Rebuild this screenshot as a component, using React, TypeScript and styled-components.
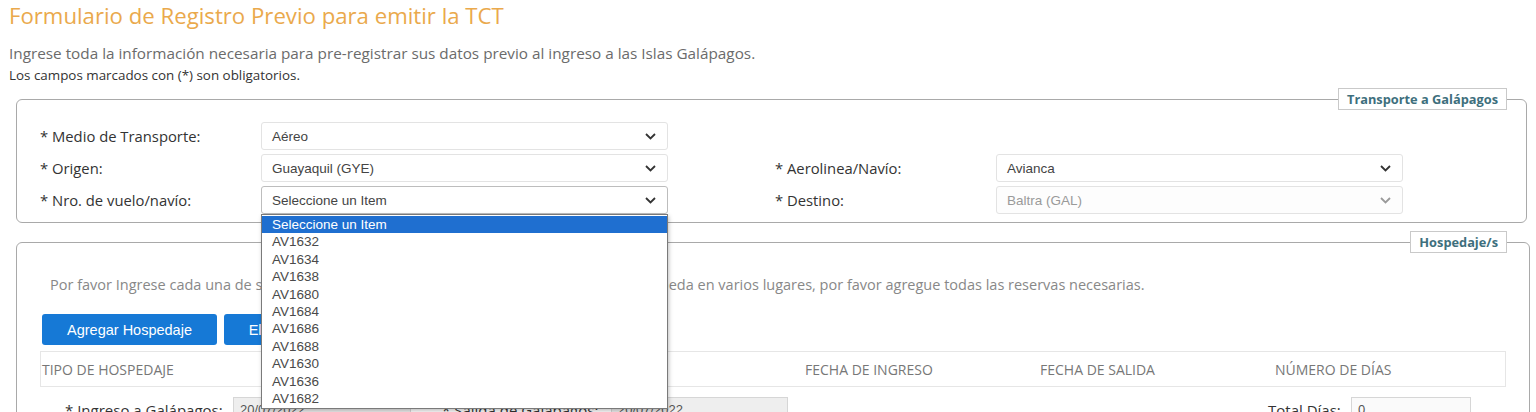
import React from 'react';
import styled, { createGlobalStyle } from 'styled-components';

const GlobalStyle = createGlobalStyle`
  body {
    margin: 0;
    background: #ffffff;
    font-family: "Open Sans", "Liberation Sans", sans-serif;
    color: #333;
    overflow: hidden;
  }
`;

const Page = styled.div`
  width: 1536px;
  height: 412px;
  box-sizing: border-box;
  padding: 0 9px;
  overflow: hidden;
`;

const Title = styled.h1`
  margin: 0;
  font-size: 22.2px;
  font-weight: 400;
  line-height: 32px;
  color: #eaa94c;
`;

const Intro = styled.p`
  margin: 11px 0 0;
  font-size: 15.3px;
  line-height: 20px;
  color: #6b6b6b;
`;

const Note = styled.p`
  margin: 4px 0 0;
  font-size: 13.4px;
  line-height: 16px;
  color: #333;
`;

const Panel = styled.fieldset<{ $top: number; $right: number }>`
  margin: ${p => p.$top}px ${p => p.$right}px 0 7px;
  padding: 0 23px 8px 23px;
  border: 1px solid #a9a9a9;
  border-radius: 6px;
  min-width: 0;
`;

const Legend = styled.legend<{ $right: number }>`
  margin-left: auto;
  margin-right: ${p => p.$right}px;
  padding: 0 8px;
  height: 22px;
  box-sizing: border-box;
  border: 1px solid #c9c9c9;
  background: #fff;
  font-size: 12.8px;
  font-weight: 700;
  line-height: 20px;
  color: #3e6f7d;
`;

const TransportRows = styled.div`
  display: flex;
  flex-direction: column;
  gap: 4px;
  padding-top: 12px;
`;

const Row = styled.div`
  display: flex;
  gap: 107px;
`;

const Field = styled.div`
  display: flex;
  align-items: center;
`;

const Label = styled.span`
  width: 221px;
  font-size: 14.8px;
  color: #333;
`;

const SelectWrap = styled.div`
  position: relative;
  width: 407px;
`;

const SelectBox = styled.div<{ $disabled?: boolean; $open?: boolean }>`
  height: 28px;
  box-sizing: border-box;
  display: flex;
  align-items: center;
  justify-content: space-between;
  padding: 0 11px 0 10px;
  border: 1px solid ${p => (p.$open ? '#bdbdbd' : '#e3e3e3')};
  border-radius: 3px;
  background: ${p => (p.$disabled ? '#fdfdfd' : '#fff')};
  font-family: "Liberation Sans", Arial, sans-serif;
  font-size: 13.5px;
  color: ${p => (p.$disabled ? '#9a9a9a' : '#444')};
  svg {
    color: ${p => (p.$disabled ? '#9a9a9a' : '#333')};
  }
`;

const OptionList = styled.ul`
  position: absolute;
  top: 100%;
  left: 0;
  right: 0;
  z-index: 10;
  margin: 0;
  padding: 1px 0;
  list-style: none;
  background: #fff;
  border: 1px solid #7a7a7a;
  box-shadow: 1px 2px 4px rgba(0, 0, 0, 0.25);
`;

const Option = styled.li<{ $active?: boolean }>`
  height: 17.4px;
  line-height: 17.4px;
  padding-left: 10px;
  font-family: "Liberation Sans", Arial, sans-serif;
  font-size: 13.5px;
  color: ${p => (p.$active ? '#fff' : '#4a4a4a')};
  background: ${p => (p.$active ? '#1f6fd0' : 'transparent')};
`;

const HelpText = styled.p`
  margin: 0;
  padding: 22px 0 0 10px;
  font-size: 14.5px;
  line-height: 20px;
  color: #888;
  white-space: nowrap;
`;

const Actions = styled.div`
  display: flex;
  gap: 7px;
  margin-top: 19px;
  padding-left: 2px;
`;

const Button = styled.button`
  height: 31px;
  width: 175px;
  border: none;
  border-radius: 3px;
  background: #1679d6;
  color: #fff;
  font-family: "Liberation Sans", Arial, sans-serif;
  font-size: 14.5px;
`;

const TableHead = styled.div`
  display: grid;
  grid-template-columns: 763px 235px 235px 1fr;
  align-items: center;
  height: 36px;
  margin-top: 6px;
  box-sizing: border-box;
  border: 1px solid #e6e6e6;
  padding-left: 1px;
  font-size: 14px;
  color: #777;
`;

const DatesRow = styled.div`
  display: flex;
  align-items: center;
  margin-top: 10px;
  padding-left: 25px;
`;

const DateLabel = styled.span<{ $w: number }>`
  width: ${p => p.$w}px;
  font-size: 15px;
  color: #333;
  white-space: nowrap;
`;

const TextInput = styled.div<{ $w: number; $muted?: boolean }>`
  width: ${p => p.$w}px;
  height: 26px;
  box-sizing: border-box;
  padding: 4px 6px;
  border: 1px solid #d6d6d6;
  background: ${p => (p.$muted ? '#eeeeee' : '#fafafa')};
  font-family: "Liberation Sans", Arial, sans-serif;
  font-size: 13px;
  color: #555;
`;

const Spacer = styled.div<{ $w: number }>`
  width: ${p => p.$w}px;
  flex: none;
`;

const Chevron = () => (
  <svg width="11" height="7" viewBox="0 0 11 7" fill="none">
    <path d="M1 1l4.5 4.5L10 1" stroke="currentColor" strokeWidth="1.8" />
  </svg>
);

const Select = ({ value, disabled, options }: { value: string; disabled?: boolean; options?: string[] }) => (
  <SelectWrap>
    <SelectBox $disabled={disabled} $open={!!options}>
      <span>{value}</span>
      <Chevron />
    </SelectBox>
    {options && (
      <OptionList>
        {options.map((o, i) => (
          <Option key={o} $active={i === 0}>{o}</Option>
        ))}
      </OptionList>
    )}
  </SelectWrap>
);

const flights = ['Seleccione un Item', 'AV1632', 'AV1634', 'AV1638', 'AV1680', 'AV1684', 'AV1686', 'AV1688', 'AV1630', 'AV1636', 'AV1682'];

const App = () => {
  return (
    <Page>
      <GlobalStyle />
      <Title>Formulario de Registro Previo para emitir la TCT</Title>
      <Intro>Ingrese toda la información necesaria para pre-registrar sus datos previo al ingreso a las Islas Galápagos.</Intro>
      <Note>Los campos marcados con (*) son obligatorios.</Note>

      <Panel $top={5} $right={0}>
        <Legend $right={-4}>Transporte a Galápagos</Legend>
        <TransportRows>
          <Row>
            <Field>
              <Label>* Medio de Transporte:</Label>
              <Select value="Aéreo" />
            </Field>
          </Row>
          <Row>
            <Field>
              <Label>* Origen:</Label>
              <Select value="Guayaquil (GYE)" />
            </Field>
            <Field>
              <Label>* Aerolinea/Navío:</Label>
              <Select value="Avianca" />
            </Field>
          </Row>
          <Row>
            <Field>
              <Label>* Nro. de vuelo/navío:</Label>
              <Select value="Seleccione un Item" options={flights} />
            </Field>
            <Field>
              <Label>* Destino:</Label>
              <Select value="Baltra (GAL)" disabled />
            </Field>
          </Row>
        </TransportRows>
      </Panel>

      <Panel $top={8} $right={-3}>
        <Legend $right={-1}>Hospedaje/s</Legend>
        <HelpText>
          Por favor Ingrese cada una de sus reservas de hospedaje en las Galápagos. Si usted se hospeda en varios lugares, por favor agregue todas las reservas necesarias.
        </HelpText>
        <Actions>
          <Button>Agregar Hospedaje</Button>
          <Button>Eliminar Hospedaje</Button>
        </Actions>
        <TableHead>
          <span>TIPO DE HOSPEDAJE</span>
          <span>FECHA DE INGRESO</span>
          <span>FECHA DE SALIDA</span>
          <span>NÚMERO DE DÍAS</span>
        </TableHead>
        <DatesRow>
          <DateLabel $w={168}>* Ingreso a Galápagos:</DateLabel>
          <TextInput $w={178} $muted>20/07/2022</TextInput>
          <Spacer $w={31} />
          <DateLabel $w={169}>* Salida de Galápagos:</DateLabel>
          <TextInput $w={177} $muted>20/07/2022</TextInput>
          <Spacer $w={480} />
          <DateLabel $w={83}>Total Días:</DateLabel>
          <TextInput $w={120}>0</TextInput>
        </DatesRow>
      </Panel>
    </Page>
  );
};

export default App;
